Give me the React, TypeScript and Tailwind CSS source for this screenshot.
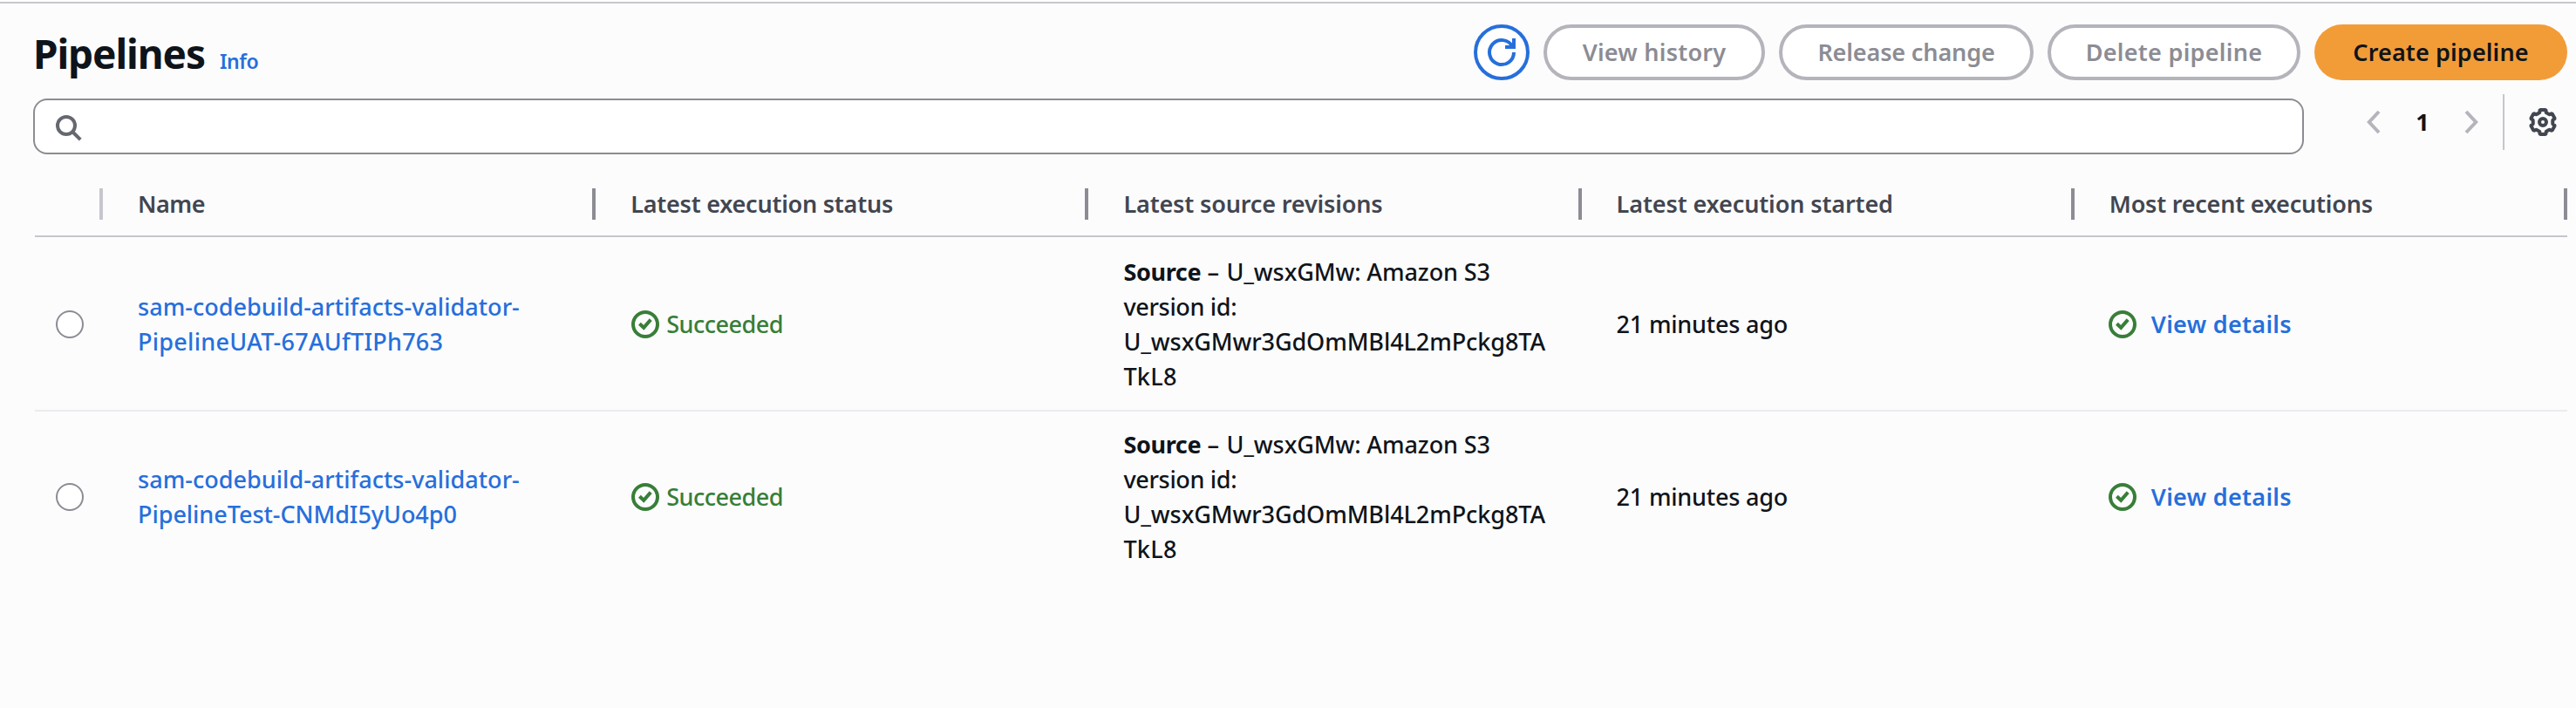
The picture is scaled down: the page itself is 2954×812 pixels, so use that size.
import type { ReactNode } from "react";

type Line = { text: string; tracking: string };

type Pipeline = { id: string; name: Line[] };

const pipelines: Pipeline[] = [
  {
    id: "uat",
    name: [
      { text: "sam-codebuild-artifacts-validator-", tracking: "tracking-[0.03px]" },
      { text: "PipelineUAT-67AUfTIPh763", tracking: "tracking-[0.27px]" },
    ],
  },
  {
    id: "test",
    name: [
      { text: "sam-codebuild-artifacts-validator-", tracking: "tracking-[0.03px]" },
      { text: "PipelineTest-CNMdI5yUo4p0", tracking: "tracking-[-0.04px]" },
    ],
  },
];

const columns: Line[] = [
  { text: "Name", tracking: "tracking-[-0.45px]" },
  { text: "Latest execution status", tracking: "tracking-[-0.23px]" },
  { text: "Latest source revisions", tracking: "tracking-[-0.14px]" },
  { text: "Latest execution started", tracking: "tracking-[-0.11px]" },
  { text: "Most recent executions", tracking: "tracking-[-0.22px]" },
];

const disabledActions: (Line & { width: string })[] = [
  { text: "View history", tracking: "tracking-[0.25px]", width: "w-[254px]" },
  { text: "Release change", tracking: "tracking-[-0.13px]", width: "w-[292px]" },
  { text: "Delete pipeline", tracking: "tracking-[0.28px]", width: "w-[290px]" },
];

const gridColumns = "grid grid-cols-[78px_repeat(5,minmax(0,1fr))]";

function Icon({ className, children }: { className?: string; children: ReactNode }) {
  return (
    <svg
      viewBox="0 0 16 16"
      fill="none"
      stroke="currentColor"
      strokeWidth="2"
      className={`block size-8 shrink-0 overflow-visible ${className ?? ""}`}
    >
      {children}
    </svg>
  );
}

function SuccessIcon() {
  return (
    <Icon className="text-[#387e38]">
      <circle cx="8" cy="8" r="7" />
      <path d="m4.7 7.6 2.4 2.3 4-4.6" />
    </Icon>
  );
}

// Six identical teeth around the centre of a 16-unit box.
function gearOutline() {
  const tooth: [number, number][] = [
    [-1.85, 5.5],
    [-1.75, 6.7],
    [-1.4, 7],
    [1.4, 7],
    [1.75, 6.7],
    [1.85, 5.5],
    [2.75, 4.9],
  ];
  const points: string[] = [];
  for (let k = 0; k < 6; k++) {
    const a = (k * Math.PI) / 3;
    for (const [x, y] of tooth) {
      const px = 8 + x * Math.cos(a) + y * Math.sin(a);
      const py = 8 + x * Math.sin(a) - y * Math.cos(a);
      points.push(`${px.toFixed(2)} ${py.toFixed(2)}`);
    }
  }
  return `M${points.join("L")}Z`;
}

function Toolbar() {
  return (
    <header className="flex h-16 items-center justify-between">
      <div className="flex items-baseline pt-px">
        <h1 className="text-[46px] leading-[60px] font-bold tracking-[-1.1px]">Pipelines</h1>
        <a className="ml-[17px] text-[23px] font-semibold tracking-[-0.37px] text-[#266fdb]">Info</a>
      </div>
      <div className="flex gap-4">
        <button className="flex size-16 items-center justify-center rounded-full border-4 border-[#266fdb] bg-white text-[#266fdb]">
          <Icon>
            <path d="M15 8a7 7 0 1 1-.75-3.15" />
            <path d="M10 5h5V0" />
          </Icon>
        </button>
        {disabledActions.map((action) => (
          <button
            key={action.text}
            className={`h-16 rounded-full border-4 border-[#b4b4bb] bg-white leading-[40px] font-semibold text-[#8c8c94] ${action.width} ${action.tracking}`}
          >
            {action.text}
          </button>
        ))}
        <button className="h-16 w-[290px] rounded-full bg-[#f29c38] leading-[40px] font-semibold tracking-[0.14px]">
          Create pipeline
        </button>
      </div>
    </header>
  );
}

function Filters() {
  return (
    <div className="mt-[21px] flex">
      <div className="h-16 flex-1 rounded-2xl border-2 border-[#8c8c94] bg-white pt-[15px] pl-[22px] text-[#656871]">
        <Icon>
          <circle cx="7" cy="7" r="5" />
          <path d="m10.5 10.5 4.6 4.6" />
        </Icon>
      </div>
      <div className="mt-[-5px] ml-[64px] flex h-16 w-[238px] items-center">
        <Icon className="text-[#b4b4bb]">
          <path d="M11 2 5.4 8l5.6 6" />
        </Icon>
        <span className="w-20 text-center leading-[40px] font-bold">1</span>
        <Icon className="text-[#b4b4bb]">
          <path d="m5 2 5.6 6L5 14" />
        </Icon>
        <span className="ml-5 h-16 w-0.5 bg-[#c6c6cd]" />
        <Icon className="ml-7 text-[#424650]">
          <path d={gearOutline()} strokeLinejoin="round" />
          <circle cx="8" cy="8" r="2" />
        </Icon>
      </div>
    </div>
  );
}

function TableHeader() {
  return (
    <div className={`${gridColumns} h-[95px] border-b-2 border-[#c6c6cd] pt-[37px]`}>
      <div className="mt-0.5 h-9 border-r-4 border-[#c6c6cd]" />
      {columns.map((column) => (
        <div
          key={column.text}
          className={`mt-0.5 h-9 border-r-4 border-[#8c8c94] pl-10 leading-[36px] font-semibold text-[#424650] ${column.tracking}`}
        >
          {column.text}
        </div>
      ))}
    </div>
  );
}

function TableRow({ pipeline }: { pipeline: Pipeline }) {
  return (
    <div className={`${gridColumns} h-[198px] items-center border-t-2 border-[#ebebf0] first:border-transparent`}>
      <span className="ml-6 size-8 rounded-full border-2 border-[#8c8c94] bg-white" />
      <a className="pl-10 text-[#266fdb]">
        {pipeline.name.map((line) => (
          <span key={line.text} className={`block ${line.tracking}`}>
            {line.text}
          </span>
        ))}
      </a>
      <div className="flex items-center pl-[41px] text-[#387e38]">
        <SuccessIcon />
        <span className="ml-2 tracking-[-0.5px]">Succeeded</span>
      </div>
      <div className="pl-10 whitespace-nowrap">
        <div className="flex">
          <b className="w-24 font-bold tracking-[-0.34px]">Source</b>
          <span className="w-[22px]">–</span>
          <span className="tracking-[-0.08px]">U_wsxGMw: Amazon S3</span>
        </div>
        <div className="tracking-[-0.32px]">version id:</div>
        <div className="tracking-[-0.08px]">U_wsxGMwr3GdOmMBl4L2mPckg8TA</div>
        <div className="tracking-[0.3px]">TkL8</div>
      </div>
      <div className="pl-10 tracking-[-0.2px]">21 minutes ago</div>
      <div className="flex items-center pl-[39px]">
        <SuccessIcon />
        <a className="ml-[17px] font-semibold tracking-[0.31px] text-[#266fdb]">View details</a>
      </div>
    </div>
  );
}

export default function App() {
  return (
    <main className="h-[812px] overflow-hidden border-t-2 border-white bg-[#fcfcfd] font-['Noto_Sans',sans-serif] text-[27px] leading-[40px] font-medium text-[#0f141a]">
      <div className="border-t-2 border-[#c6c6cd] pt-6 pr-[10px] pl-[38px]">
        <Toolbar />
        <Filters />
        <div className="ml-0.5">
          <TableHeader />
          <div>
            {pipelines.map((pipeline) => (
              <TableRow key={pipeline.id} pipeline={pipeline} />
            ))}
          </div>
        </div>
      </div>
    </main>
  );
}
